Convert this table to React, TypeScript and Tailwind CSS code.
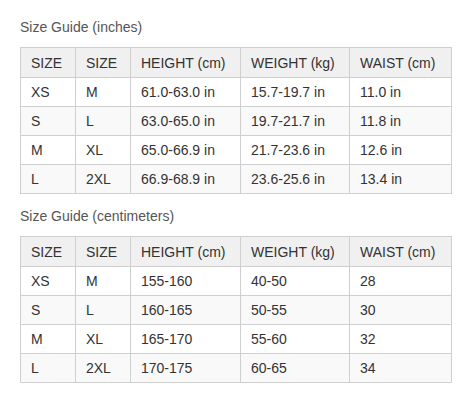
import React from "react";

const headers = ["SIZE", "SIZE", "HEIGHT (cm)", "WEIGHT (kg)", "WAIST (cm)"];

const inches = [
  ["XS", "M", "61.0-63.0 in", "15.7-19.7 in", "11.0 in"],
  ["S", "L", "63.0-65.0 in", "19.7-21.7 in", "11.8 in"],
  ["M", "XL", "65.0-66.9 in", "21.7-23.6 in", "12.6 in"],
  ["L", "2XL", "66.9-68.9 in", "23.6-25.6 in", "13.4 in"],
];

const cms = [
  ["XS", "M", "155-160", "40-50", "28"],
  ["S", "L", "160-165", "50-55", "30"],
  ["M", "XL", "165-170", "55-60", "32"],
  ["L", "2XL", "170-175", "60-65", "34"],
];

function SizeTable({ rows }: { rows: string[][] }) {
  return (
    <table className="table-fixed border-collapse w-[431px] text-[14px] leading-5 text-[#333]">
      <colgroup>
        <col className="w-[55px]" />
        <col className="w-[55px]" />
        <col className="w-[110px]" />
        <col className="w-[109px]" />
        <col className="w-[102px]" />
      </colgroup>
      <thead>
        <tr className="h-[30px] bg-[#f0f0f0]">
          {headers.map((h, i) => (
            <th key={i} className="border border-[#cfcfcf] pl-[10px] pr-1 py-0 text-left font-normal">
              {h}
            </th>
          ))}
        </tr>
      </thead>
      <tbody>
        {rows.map((r, ri) => (
          <tr key={ri} className={ri % 2 === 1 ? "h-[29px] bg-[#f9f9f9]" : "h-[29px] bg-white"}>
            {r.map((c, ci) => (
              <td key={ci} className="border border-[#cfcfcf] pl-[10px] pr-1 py-0">
                {c}
              </td>
            ))}
          </tr>
        ))}
      </tbody>
    </table>
  );
}

export default function App() {
  return (
    <div className="w-[470px] h-[402px] bg-white pl-5 pt-[17px] font-['Liberation_Sans',Arial,sans-serif]">
      <h2 className="text-[14px] leading-5 text-[#555] font-normal mb-[10px]">Size Guide (inches)</h2>
      <SizeTable rows={inches} />
      <h2 className="text-[14px] leading-5 text-[#555] font-normal mt-[12px] mb-[10px]">Size Guide (centimeters)</h2>
      <SizeTable rows={cms} />
    </div>
  );
}
